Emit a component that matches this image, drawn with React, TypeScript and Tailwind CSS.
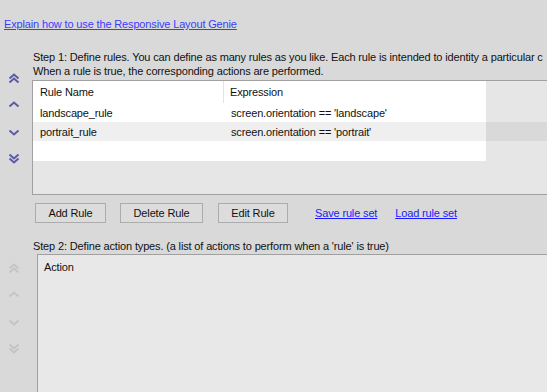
import type { ReactNode } from "react";

const Chevrons = ({ kind, color }: { kind: "top" | "up" | "down" | "bottom"; color: string }) => {
  const up = kind === "top" || kind === "up";
  const double = kind === "top" || kind === "bottom";
  const one = up ? "M1.5 5.5 L6 1.5 L10.5 5.5" : "M1.5 1.5 L6 5.5 L10.5 1.5";
  return (
    <svg width="12" height={double ? 11 : 7} viewBox={double ? "0 0 12 11" : "0 0 12 7"} fill="none">
      <path d={one} stroke={color} strokeWidth="2" />
      {double && <path d={one} transform="translate(0 4)" stroke={color} strokeWidth="2" />}
    </svg>
  );
};

const ArrowColumn = ({ color }: { color: string }) => (
  <div className="flex w-[32px] shrink-0 flex-col items-center pr-[5px]">
    <Chevrons kind="top" color={color} />
    <div className="mt-[17px]">
      <Chevrons kind="up" color={color} />
    </div>
    <div className="mt-[21px]">
      <Chevrons kind="down" color={color} />
    </div>
    <div className="mt-[17px]">
      <Chevrons kind="bottom" color={color} />
    </div>
  </div>
);

const Row = ({ name, expr, shaded }: { name: string; expr: string; shaded?: boolean }) => (
  <div className="flex h-[19px]">
    <div className={`flex w-[453px] items-center ${shaded ? "bg-[#efefef]" : "bg-white"}`}>
      <span className="w-[191px] pl-[7px]">{name}</span>
      <span className="pl-[7px]">{expr}</span>
    </div>
    <div className={`flex-1 ${shaded ? "bg-[#d9d9d9]" : ""}`} />
  </div>
);

const Button = ({ children, width }: { children: ReactNode; width: string }) => (
  <button className={`h-[20px] ${width} border border-[#acacac] bg-[#dcdcdc] text-[#111]`}>{children}</button>
);

export default function App() {
  return (
    <div
      className="h-[392px] w-[547px] overflow-hidden bg-[#d9d9d9] text-[11px] leading-[14px] tracking-[-0.15px] text-[#111]"
      style={{ fontFamily: '"Liberation Sans", Arial, sans-serif' }}
    >
      <div className="pl-[4px] pt-[17px]">
        <a className="text-[#3b3bff] underline">Explain how to use the Responsive Layout Genie</a>
      </div>

      {/* Step 1 */}
      <div className="mt-[19px] flex">
        <div className="pt-[23px]">
          <ArrowColumn color="#5b5ba8" />
        </div>
        <div className="min-w-0 flex-1">
          <p className="whitespace-nowrap pl-[1px]">
            Step 1: Define rules. You can define as many rules as you like. Each rule is intended to identity a particular c
            <br />
            When a rule is true, the corresponding actions are performed.
          </p>
          <div className="mt-[2px] h-[115px] w-[600px] border border-[#a0a0a0] bg-[#e6e6e6]">
            <div className="flex h-[22px]">
              <div className="flex w-[453px] items-center bg-white">
                <span className="flex h-full w-[191px] items-center border-r border-[#e4e4e4] pl-[7px]">Rule Name</span>
                <span className="pl-[6px]">Expression</span>
              </div>
            </div>
            <Row name="landscape_rule" expr="screen.orientation == 'landscape'" />
            <Row name="portrait_rule" expr="screen.orientation == 'portrait'" shaded />
            <div className="h-[20px] w-[453px] bg-white" />
          </div>
          <div className="mt-[8px] flex items-center pl-[3px]">
            <Button width="w-[71px]">Add Rule</Button>
            <div className="ml-[14px]">
              <Button width="w-[83px]">Delete Rule</Button>
            </div>
            <div className="ml-[15px]">
              <Button width="w-[70px]">Edit Rule</Button>
            </div>
            <a className="ml-[27px] text-[#1a1aff] underline">Save rule set</a>
            <a className="ml-[18px] text-[#1a1aff] underline">Load rule set</a>
          </div>
        </div>
      </div>

      {/* Step 2 */}
      <div className="mt-[16px] pl-[33px]">
        <p className="whitespace-nowrap">Step 2: Define action types. (a list of actions to perform when a 'rule' is true)</p>
      </div>
      <div className="mt-[1px] flex">
        <div className="w-[37px] shrink-0 pt-[9px]">
          <ArrowColumn color="#c4c4c4" />
        </div>
        <div className="h-[200px] flex-1 border-l border-t border-[#a0a0a0] bg-[#e8e8e8] px-[6px] pt-[5px]">
          Action
        </div>
      </div>
    </div>
  );
}
